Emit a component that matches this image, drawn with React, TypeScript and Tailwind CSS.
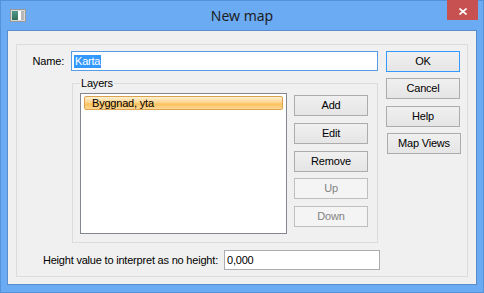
import React from "react";

const ui = { fontFamily: '"Liberation Sans", Arial, sans-serif' };

function Btn({ label, disabled, primary, className = "" }: { label: string; disabled?: boolean; primary?: boolean; className?: string }) {
  const base = "w-[74px] h-[21px] flex items-center justify-center text-[11px] leading-[13px] border";
  const look = disabled
    ? "border-[#bfbfbf] bg-[#f4f4f4] text-[#838383]"
    : primary
      ? "border-[#3399ff] bg-[linear-gradient(to_bottom,#f0f0f0,#e5e5e5)] text-black"
      : "border-[#acacac] bg-[linear-gradient(to_bottom,#f0f0f0,#e5e5e5)] text-black";
  return <div className={`${base} ${look} ${className}`}>{label}</div>;
}

function MapIcon() {
  return (
    <svg width="16" height="13" viewBox="0 0 16 13">
      <rect x="0.5" y="0.5" width="15" height="12" fill="#d8d8d8" stroke="#9a9a9a" />
      <defs>
        <linearGradient id="g" x1="0" y1="0" x2="0" y2="1">
          <stop offset="0" stopColor="#4f9a8a" />
          <stop offset="1" stopColor="#2f6f5a" />
        </linearGradient>
      </defs>
      <rect x="2" y="2" width="6" height="9" fill="url(#g)" />
      <rect x="8" y="2" width="3" height="9" fill="#ffffff" />
      <rect x="11" y="2" width="3" height="9" fill="#b8b8b8" />
    </svg>
  );
}

export default function App() {
  return (
    <div className="w-[484px] h-[293px] bg-[#6aabf4] border border-[#5592dc] flex flex-col tracking-[-0.2px]" style={ui}>
      {/* Title bar */}
      <div className="h-[29px] flex">
        <div className="w-[39px] pl-[9px] pt-[8px]">
          <MapIcon />
        </div>
        <div className="flex-1 text-center pt-[5px] text-[14px] leading-[20px] tracking-normal text-[#1e1e1e]" style={{ fontFamily: '"Noto Sans", "Open Sans", sans-serif' }}>
          New map
        </div>
        <div className="w-[39px] flex justify-end pr-[5px]">
          <div className="w-[31px] h-[20px] -mt-[1px] bg-[#c75050] flex items-center justify-center pt-[2px]">
            <svg width="8" height="7" viewBox="0 0 8 7">
              <path d="M0.5 0.5 L7.5 6.5 M7.5 0.5 L0.5 6.5" stroke="#ffffff" strokeWidth="1.6" />
            </svg>
          </div>
        </div>
      </div>

      {/* Client */}
      <div className="mx-[6px] mb-[7px] flex-1 border border-[#5b8dcc] bg-[#f0f0f0] pt-[13px] pl-[8px]">
        <div className="w-[452px] h-[233px] border border-[#dcdcdc] flex">
          {/* Left column */}
          <div className="w-[361px] flex flex-col">
            <div className="mt-[6px] h-[20px] flex items-center">
              <div className="w-[54px] pr-[7px] text-right text-[11px] leading-[13px] text-black">Name:</div>
              <div className="w-[307px] h-[20px] border border-[#569de5] bg-white flex items-center pl-[2px]">
                <span className="bg-[#3399ff] text-white text-[11px] leading-[13px] px-[1px]">Karta</span>
              </div>
            </div>

            <fieldset className="mt-[6px] ml-[55px] w-[306px] h-[166px] border border-[#dcdcdc] px-[7px] pb-0 pt-0 m-0">
              <legend className="px-[1px] text-[11px] leading-[13px] text-black">Layers</legend>
              <div className="flex mt-[3px]">
                <div className="w-[207px] h-[141px] border border-[#828790] bg-white">
                  <div className="mt-[2px] ml-[3px] w-[199px] h-[14px] rounded-[2px] border border-[#dca24e] bg-[linear-gradient(to_bottom,#fff2d4,#fdd48e_45%,#fbc25e_60%,#fdd898)] flex items-center pl-[7px] text-[11px] leading-[13px] text-black">
                    Byggnad, yta
                  </div>
                </div>
                <div className="ml-[7px] flex flex-col">
                  <Btn label="Add" className="mt-[2px]" />
                  <Btn label="Edit" className="mt-[7px]" />
                  <Btn label="Remove" className="mt-[7px]" />
                  <Btn label="Up" disabled className="mt-[6px]" />
                  <Btn label="Down" disabled className="mt-[7px]" />
                </div>
              </div>
            </fieldset>

            <div className="mt-[7px] h-[20px] flex items-center">
              <div className="w-[207px] shrink-0 pr-[6px] text-right text-[11px] leading-[13px] text-black whitespace-nowrap">
                Height value to interpret as no height:
              </div>
              <div className="w-[156px] shrink-0 h-[20px] border border-[#abadb3] bg-white flex items-center pl-[2px] text-[11px] leading-[13px] text-black">
                0,000
              </div>
            </div>
          </div>

          {/* Right column */}
          <div className="ml-[8px] flex flex-col">
            <Btn label="OK" primary className="mt-[6px]" />
            <Btn label="Cancel" className="mt-[6px]" />
            <Btn label="Help" className="mt-[7px]" />
            <Btn label="Map Views" className="mt-[6px] ml-[1px]" />
          </div>
        </div>
      </div>
    </div>
  );
}
